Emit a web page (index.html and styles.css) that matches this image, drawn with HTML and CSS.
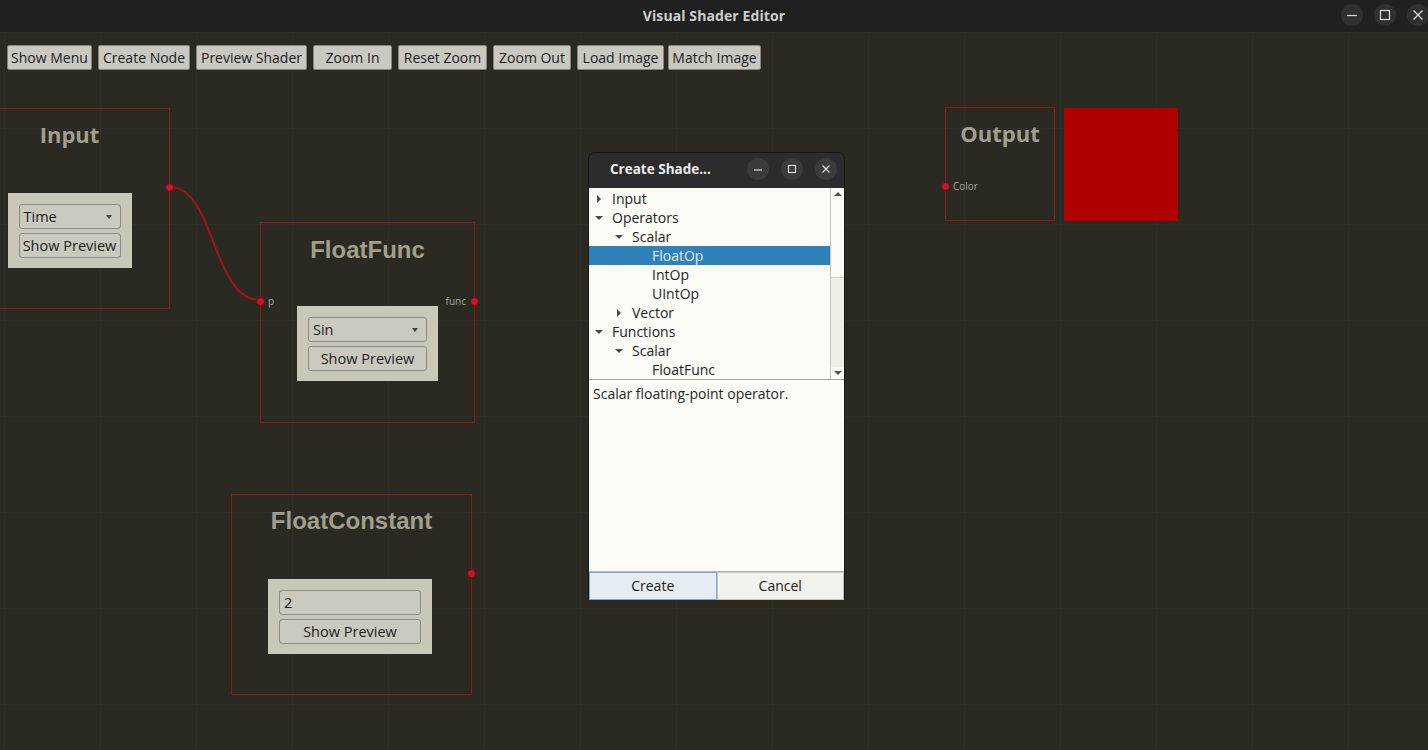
FILE: index.html
```html
<!DOCTYPE html>
<html>
<head>
<meta charset="utf-8">
<title>Visual Shader Editor</title>
<link rel="stylesheet" href="styles.css">
</head>
<body>
<div class="window">
  <header class="titlebar">
    <div class="titlebar-spacer"></div>
    <div class="title">Visual Shader Editor</div>
    <div class="wm-buttons">
      <span class="wm-btn"><svg width="12" height="12" viewBox="0 0 12 12"><path d="M1 6.5h10" stroke="#dcdcdc" stroke-width="1.2"/></svg></span>
      <span class="wm-btn"><svg width="12" height="12" viewBox="0 0 12 12"><rect x="1.5" y="1.5" width="9" height="9" fill="none" stroke="#dcdcdc" stroke-width="1.2"/></svg></span>
      <span class="wm-btn"><svg width="12" height="12" viewBox="0 0 12 12"><path d="M1.5 1.5l9 9M10.5 1.5l-9 9" stroke="#dcdcdc" stroke-width="1.3"/></svg></span>
    </div>
  </header>

  <main class="canvas">
    <nav class="toolbar">
      <button class="tb-btn w-show">Show Menu</button>
      <button class="tb-btn w-create">Create Node</button>
      <button class="tb-btn w-preview">Preview Shader</button>
      <button class="tb-btn w-zin">Zoom In</button>
      <button class="tb-btn w-reset">Reset Zoom</button>
      <button class="tb-btn w-zout">Zoom Out</button>
      <button class="tb-btn w-load">Load Image</button>
      <button class="tb-btn w-match">Match Image</button>
    </nav>

    <svg class="wires" width="1428" height="718" viewBox="0 0 1428 718">
      <path d="M170 155 C 215 155, 212 268, 260 268" fill="none" stroke="#a01616" stroke-width="2"/>
    </svg>

    <section class="node node-input">
      <h2 class="node-title title-round">Input</h2>
      <div class="panel">
        <div class="combo combo-input"><span>Time</span><i class="caret"></i></div>
        <div class="pbtn">Show Preview</div>
      </div>
      <span class="port port-out"></span>
    </section>

    <section class="node node-func">
      <h2 class="node-title">FloatFunc</h2>
      <div class="panel">
        <div class="combo combo-func"><span>Sin</span><i class="caret"></i></div>
        <div class="pbtn">Show Preview</div>
      </div>
      <span class="port port-in"></span>
      <span class="port-label label-in">p</span>
      <span class="port-label label-out">func</span>
      <span class="port port-out"></span>
    </section>

    <section class="node node-const">
      <h2 class="node-title">FloatConstant</h2>
      <div class="panel panel-const">
        <div class="field">2</div>
        <div class="pbtn">Show Preview</div>
      </div>
      <span class="port port-out"></span>
    </section>

    <section class="node node-output">
      <h2 class="node-title title-round">Output</h2>
      <span class="port port-in"></span>
      <span class="port-label label-in">Color</span>
    </section>

    <div class="preview-swatch"></div>

    <div class="dialog">
      <div class="dlg-titlebar">
        <div class="dlg-title">Create Shade...</div>
        <div class="dlg-buttons">
          <span class="dlg-btn"><svg width="10" height="10" viewBox="0 0 10 10"><path d="M1 6h8" stroke="#e0e0e0" stroke-width="1.2"/></svg></span>
          <span class="dlg-btn"><svg width="10" height="10" viewBox="0 0 10 10"><rect x="1.5" y="1.5" width="7" height="7" fill="none" stroke="#e0e0e0" stroke-width="1.1"/></svg></span>
          <span class="dlg-btn"><svg width="10" height="10" viewBox="0 0 10 10"><path d="M1.5 1.5l7 7M8.5 1.5l-7 7" stroke="#e0e0e0" stroke-width="1.2"/></svg></span>
        </div>
      </div>
      <div class="dlg-body">
        <div class="tree">
          <ul class="tree-list">
            <li class="row lvl0"><span class="twisty"><i class="arrow arrow-right"></i></span>Input</li>
            <li class="row lvl0"><span class="twisty"><i class="arrow arrow-down"></i></span>Operators</li>
            <li class="row lvl1"><span class="twisty"><i class="arrow arrow-down"></i></span>Scalar</li>
            <li class="row lvl2 selected"><span class="twisty"></span>FloatOp</li>
            <li class="row lvl2"><span class="twisty"></span>IntOp</li>
            <li class="row lvl2"><span class="twisty"></span>UIntOp</li>
            <li class="row lvl1"><span class="twisty"><i class="arrow arrow-right"></i></span>Vector</li>
            <li class="row lvl0"><span class="twisty"><i class="arrow arrow-down"></i></span>Functions</li>
            <li class="row lvl1"><span class="twisty"><i class="arrow arrow-down"></i></span>Scalar</li>
            <li class="row lvl2"><span class="twisty"></span>FloatFunc</li>
          </ul>
          <div class="scrollbar">
            <span class="sb-arrow sb-up"></span>
            <span class="sb-thumb"></span>
            <span class="sb-track"></span>
            <span class="sb-arrow sb-down"></span>
          </div>
        </div>
        <div class="description">Scalar floating-point operator.</div>
        <div class="dlg-actions">
          <div class="dlg-action default">Create</div>
          <div class="dlg-action">Cancel</div>
        </div>
      </div>
    </div>
  </main>
</div>
</body>
</html>
```

FILE: styles.css
```css
* { box-sizing: border-box; }

html, body {
  margin: 0;
  padding: 0;
  width: 1428px;
  height: 750px;
  overflow: hidden;
  background: #2b2a22;
}

.window {
  width: 1428px;
  height: 750px;
  display: flex;
  flex-direction: column;
  font-family: "Open Sans", "Noto Sans", sans-serif;
}

/* ---------- title bar ---------- */
.titlebar {
  height: 32px;
  flex: 0 0 32px;
  background: #202020;
  display: grid;
  grid-template-columns: 1fr auto 1fr;
  align-items: center;
  padding-bottom: 2px;
}
.title {
  color: #cfcfcf;
  font-weight: 700;
  font-size: 14px;
  letter-spacing: 0.1px;
}
.wm-buttons {
  justify-self: end;
  display: flex;
  gap: 11px;
  margin-right: -1px;
}
.wm-btn {
  width: 22px;
  height: 22px;
  border-radius: 50%;
  background: #303030;
  display: flex;
  align-items: center;
  justify-content: center;
}

/* ---------- canvas ---------- */
.canvas {
  flex: 1;
  position: relative;
  overflow: hidden;
  background-color: #2b2a22;
  background-image:
    linear-gradient(to right, rgba(70, 70, 110, 0.12) 1px, transparent 1px),
    linear-gradient(to bottom, rgba(70, 70, 110, 0.12) 1px, transparent 1px);
  background-size: 96px 96px;
  background-position: 4px 0;
}

.toolbar {
  display: flex;
  gap: 6px;
  padding: 13px 0 0 7px;
  position: relative;
  z-index: 3;
}
.tb-btn {
  height: 25px;
  padding: 0;
  background: #c9c9c1;
  border: 1px solid #85857e;
  border-radius: 2px;
  font-family: inherit;
  font-size: 14px;
  color: #1c1c1c;
  line-height: 23px;
  text-align: center;
}
.w-show    { width: 85px; }
.w-create  { width: 92px; }
.w-preview { width: 111px; }
.w-zin     { width: 79px; }
.w-reset   { width: 89px; }
.w-zout    { width: 78px; }
.w-load    { width: 87px; }
.w-match   { width: 93px; margin-left: -2px; }

.wires {
  position: absolute;
  left: 0;
  top: 0;
  z-index: 1;
}

/* ---------- nodes ---------- */
.node {
  position: absolute;
  border: 1px solid #8a1a1a;
  display: flex;
  flex-direction: column;
  align-items: center;
  z-index: 2;
}
.node-title {
  margin: 0;
  padding-top: 12px;
  height: 42px;
  line-height: 30px;
  font-family: "Liberation Sans", Arial, sans-serif;
  font-weight: 700;
  font-size: 24px;
  color: #a19f8d;
}
.title-round {
  font-family: "Open Sans", "Noto Sans", sans-serif;
  font-size: 22px;
  padding-top: 10px;
}
.node-const .node-title { padding-top: 11px; }

.node-input  { left: -31px; top: 76px;  width: 201px; height: 201px; }
.node-func   { left: 260px; top: 190px; width: 215px; height: 201px; }
.node-const  { left: 231px; top: 462px; width: 241px; height: 201px; }
.node-output { left: 945px; top: 75px;  width: 110px; height: 114px; }

.panel {
  margin-top: 41px;
  background: #c8c7b8;
  padding: 11px 11px 10px;
  display: flex;
  flex-direction: column;
  gap: 4px;
}
.node-input .panel { margin-top: 42px; }
.panel-const { margin-left: -3px; margin-top: 42px; }

.combo, .pbtn, .field {
  height: 25px;
  border: 1px solid #8d8c85;
  border-radius: 3px;
  background: #cac9be;
  font-size: 14.5px;
  color: #1e1e1e;
  line-height: 23px;
}
.combo {
  display: flex;
  align-items: center;
  justify-content: space-between;
  padding: 0 8px 0 4px;
}
.combo-input { width: 102px; }
.combo-func  { width: 119px; }
.caret {
  width: 0;
  height: 0;
  border-left: 3.5px solid transparent;
  border-right: 3.5px solid transparent;
  border-top: 4px solid #444;
}
.pbtn { text-align: center; white-space: nowrap; }
.field {
  width: 142px;
  padding-left: 4px;
}

.port {
  position: absolute;
  width: 9px;
  height: 9px;
  border-radius: 50%;
  background: #c8142c;
  border: 1px solid #6a0c10;
  top: 74px;
}
.port-out { right: -5px; }
.port-in  { left: -5px; }

.port-label {
  position: absolute;
  top: 72px;
  font-family: "Open Sans", "Noto Sans", sans-serif;
  font-size: 10px;
  color: #a5a5a0;
  line-height: 12px;
}
.label-in  { left: 7px; }
.label-out { right: 8px; }

.preview-swatch {
  position: absolute;
  left: 1064px;
  top: 76px;
  width: 114px;
  height: 113px;
  background: #b10000;
  z-index: 2;
}

/* ---------- dialog ---------- */
.dialog {
  position: absolute;
  left: 588px;
  top: 120px;
  width: 257px;
  height: 448px;
  background: #2c2c2c;
  border: 1px solid #161616;
  border-radius: 7px 7px 0 0;
  display: flex;
  flex-direction: column;
  z-index: 5;
  font-family: "Open Sans", "Noto Sans", sans-serif;
}
.dlg-titlebar {
  height: 35px;
  flex: 0 0 35px;
  display: flex;
  align-items: center;
  justify-content: space-between;
  padding: 0 7px 3px 21px;
}
.dlg-title {
  color: #ececec;
  font-weight: 700;
  font-size: 13.5px;
}
.dlg-buttons {
  display: flex;
  gap: 12px;
}
.dlg-btn {
  width: 22px;
  height: 22px;
  border-radius: 50%;
  background: #3b3b3b;
  display: flex;
  align-items: center;
  justify-content: center;
}

.dlg-body {
  flex: 1;
  background: #fbfbf5;
  display: flex;
  flex-direction: column;
}

.tree {
  height: 192px;
  flex: 0 0 192px;
  display: grid;
  grid-template-columns: 1fr 14px;
  border-bottom: 1px solid #a3a39d;
}
.tree-list {
  list-style: none;
  margin: 0;
  padding: 1px 0 0 0;
  overflow: hidden;
}
.row {
  height: 19px;
  line-height: 19px;
  font-size: 14px;
  color: #242424;
  display: flex;
  align-items: center;
  white-space: nowrap;
}
.lvl0 { padding-left: 0; }
.lvl1 { padding-left: 20px; }
.lvl2 { padding-left: 40px; }
.twisty {
  width: 19px;
  flex: 0 0 19px;
  margin-right: 4px;
  display: flex;
  align-items: center;
  justify-content: center;
}
.selected {
  background: #2f82b8;
  color: #e2e8ee;
}
.arrow {
  width: 0;
  height: 0;
}
.arrow-right {
  border-top: 4px solid transparent;
  border-bottom: 4px solid transparent;
  border-left: 4px solid #4a4a4a;
}
.arrow-down {
  border-left: 4px solid transparent;
  border-right: 4px solid transparent;
  border-top: 4px solid #4a4a4a;
}

.scrollbar {
  border-left: 1px solid #c6c6c0;
  display: flex;
  flex-direction: column;
  background: #ededE6;
}
.sb-arrow {
  height: 12px;
  flex: 0 0 12px;
  display: flex;
  align-items: center;
  justify-content: center;
  background: #fbfbf5;
}
.sb-arrow::after {
  content: "";
  width: 0;
  height: 0;
  border-left: 4px solid transparent;
  border-right: 4px solid transparent;
}
.sb-up::after { border-bottom: 4px solid #505050; }
.sb-down::after { border-top: 4px solid #505050; }
.sb-thumb {
  height: 78px;
  flex: 0 0 78px;
  background: #fbfbf5;
  border-bottom: 1px solid #cfcfc8;
}
.sb-track { flex: 1; background: #efefe8; }

.description {
  flex: 1;
  padding: 5px 4px;
  font-size: 14px;
  line-height: 18px;
  color: #262626;
}

.dlg-actions {
  height: 28px;
  flex: 0 0 28px;
  display: grid;
  grid-template-columns: 1fr 1fr;
  border-top: 1px solid #b7b7b0;
}
.dlg-action {
  font-size: 14px;
  color: #202020;
  text-align: center;
  line-height: 26px;
  background: #f3f3ee;
  border: 1px solid #c4c4bd;
}
.dlg-action.default {
  background: #e6edf2;
  border: 1px solid #79a7cf;
}
```
